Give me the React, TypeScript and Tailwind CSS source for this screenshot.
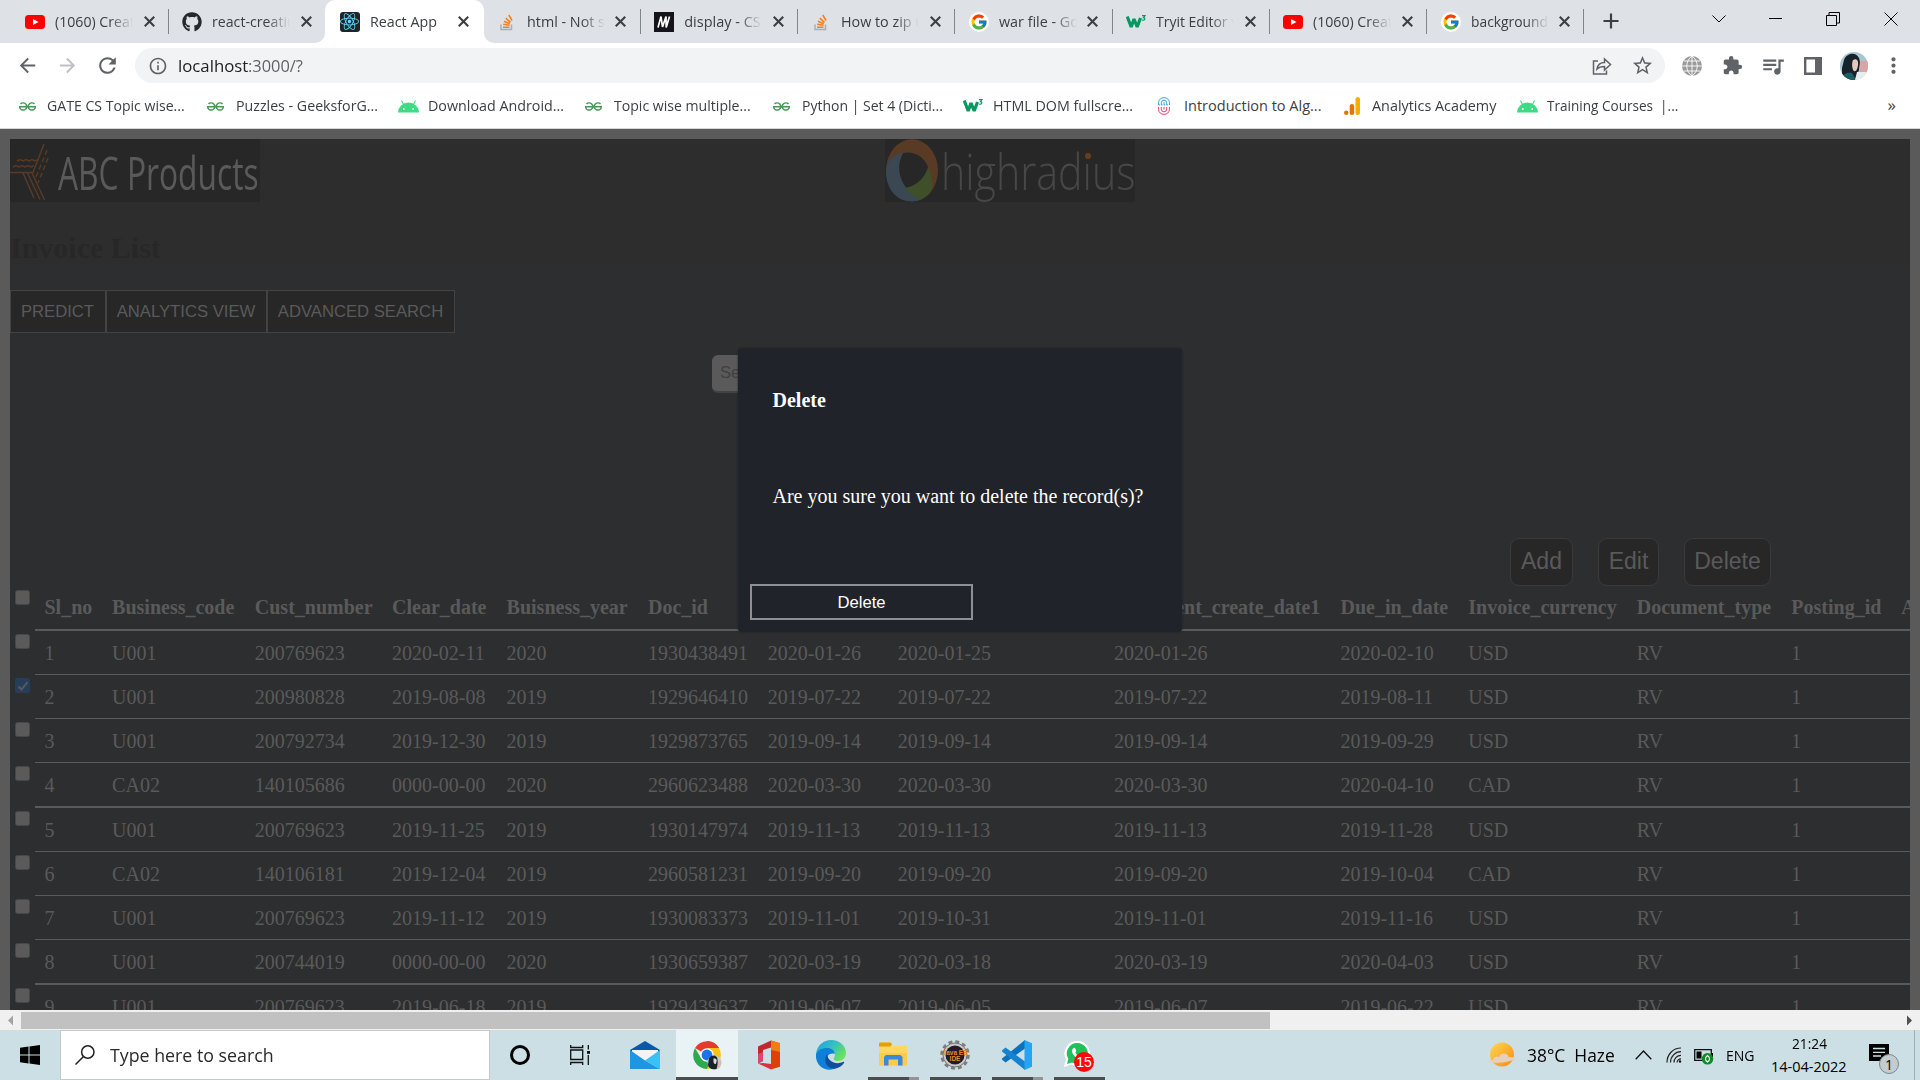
import { useLayoutEffect, useRef, useState } from "react";
import type { ReactNode } from "react";
import { FaGithub, FaReact } from "react-icons/fa";
import { FcGoogle } from "react-icons/fc";
import { SiGeeksforgeeks } from "react-icons/si";
import {
  MdArrowBack,
  MdArrowForward,
  MdRefresh,
  MdInfoOutline,
  MdStarBorder,
  MdExtension,
  MdQueueMusic,
  MdMoreVert,
} from "react-icons/md";

/* One line of text, condensed or stretched to an exact width. */
function Fit({ w, children, className = "" }: { w: number; children: string; className?: string }) {
  const ref = useRef<HTMLSpanElement>(null);
  const [scale, setScale] = useState(1);
  useLayoutEffect(() => {
    if (ref.current) setScale(w / ref.current.offsetWidth);
  }, [w]);
  return (
    <span className={"block shrink-0 whitespace-pre " + className} style={{ width: w }}>
      <span ref={ref} className="inline-block origin-left" style={{ transform: `scaleX(${scale})` }}>
        {children}
      </span>
    </span>
  );
}

const YouTube = () => (
  <svg viewBox="0 0 20 20" className="size-5">
    <rect x="0" y="3" width="20" height="14" rx="3.5" fill="#f00" />
    <path d="M8 7l5.5 3L8 13z" fill="#fff" />
  </svg>
);
const ReactFav = () => (
  <span className="flex size-5 items-center justify-center rounded-[3px] bg-[#20232a]">
    <FaReact size={19} color="#61dafb" />
  </span>
);
const StackO = () => (
  <svg viewBox="0 0 20 20" className="size-5" fill="none">
    <path d="M4 12.5v5h10.500v-5" stroke="#a9b0b8" strokeWidth="1.5" />
    <path d="M6 15.300h6.500M6.200 12.300l6.300.9M7 9.300l5.800 2.400M8.800 6.200l4.700 4.200M11.800 3l3.200 5.500" stroke="#f48024" strokeWidth="1.600" />
  </svg>
);
const Mdn = () => (
  <svg viewBox="0 0 20 20" className="size-5">
    <rect width="20" height="20" fill="#15141a" />
    <path d="M4 15.500L7 4.500L8.500 15L12 4.500L12.200 15.500L15.500 4.500" stroke="#fff" strokeWidth="1.700" fill="none" />
  </svg>
);
const Google = () => (
  <span className="flex size-5 items-center justify-center rounded-full bg-white">
    <FcGoogle size={18} />
  </span>
);
const W3 = () => (
  <svg viewBox="0 0 20 20" className="size-5" fill="none" stroke="#059862">
    <path d="M1.200 4.500l4 10.500L8 7l3.200 8L14.500 6" strokeWidth="3.200" strokeLinejoin="bevel" />
    <path d="M16 3.600h3l-1.500 2c2 0 2 3-1.500 2.600" strokeWidth="1.200" />
  </svg>
);
const Gfg = () => <SiGeeksforgeeks size={17} color="#449a57" />;
const Android = () => (
  <svg viewBox="0 0 21 16" className="h-4 w-[21px]">
    <path d="M0 14.500a10.500 10 0 0 1 21 0z" fill="#3ddc84" />
    <path d="M5.500 6.500L3.500 2.500M15.500 6.500l2-4" stroke="#3ddc84" strokeWidth="1.100" />
    <circle cx="5.800" cy="11" r=".9" fill="#fff" />
    <circle cx="15.200" cy="11" r=".9" fill="#fff" />
  </svg>
);
const Mooc = () => (
  <svg viewBox="0 0 16 20" className="h-[18px] w-4" fill="none" strokeWidth="1.100">
    <path d="M2 9V6a6 5.300 0 0 1 12 0v3M5 9V6.500a3 3 0 0 1 6 0V9M8 6v3" stroke="#3a9fd0" />
    <path d="M2 11v3a6 5.300 0 0 0 12 0v-3M5 11v2.500a3 3 0 0 0 6 0V11M8 11v3" stroke="#e8386d" />
    <path d="M2 8.800h12" stroke="#3a9fd0" strokeDasharray="1.500 1.500" />
  </svg>
);
const Analytics = () => (
  <svg viewBox="0 0 16 18" className="h-[18px] w-4">
    <rect x="11.500" y="0" width="4.500" height="18" rx="2.200" fill="#f9ab00" />
    <rect x="5.700" y="7" width="4.500" height="11" rx="2.200" fill="#e37400" />
    <circle cx="2.200" cy="15.700" r="2.200" fill="#e37400" />
  </svg>
);

const tabs: { icon: ReactNode; title: string; w: number; active?: boolean; sep?: boolean }[] = [
  { icon: <YouTube />, title: "(1060) Creat", w: 80, sep: true },
  { icon: <FaGithub size={20} color="#24292f" />, title: "react-creatin", w: 84 },
  { icon: <ReactFav />, title: "React App", w: 67, active: true },
  { icon: <StackO />, title: "html - Not so", w: 87, sep: true },
  { icon: <Mdn />, title: "display - CSS", w: 85, sep: true },
  { icon: <StackO />, title: "How to zip u", w: 83, sep: true },
  { icon: <Google />, title: "war file - Goo", w: 89, sep: true },
  { icon: <W3 />, title: "Tryit Editor v", w: 82, sep: true },
  { icon: <YouTube />, title: "(1060) Creat", w: 80, sep: true },
  { icon: <Google />, title: "background-", w: 81, sep: true },
];

const Cross = () => (
  <svg viewBox="0 0 10 10" className="size-[11px]" stroke="#3c4043" strokeWidth="1.900">
    <path d="M.7.7l8.600 8.600M9.300.7L.7 9.300" />
  </svg>
);

function TabStrip() {
  return (
    <div className="flex h-[43px] bg-[#dee1e6] pl-[11.5px]">
      {tabs.map((t, i) => (
        <div
          key={i}
          className={
            "relative flex w-[157.3px] shrink-0 items-center " +
            (t.active ? "-ml-px w-[159.300px] -mr-px rounded-t-[10px] bg-white pl-[14.500px]" : "pl-[13.500px]")
          }
        >
          {t.active && (
            <>
              <span className="absolute bottom-0 -left-2.5 size-2.5 bg-white">
                <span className="block size-full rounded-br-[10px] bg-[#dee1e6]" />
              </span>
              <span className="absolute -right-2.5 bottom-0 size-2.5 bg-white">
                <span className="block size-full rounded-bl-[10px] bg-[#dee1e6]" />
              </span>
            </>
          )}
          <span className="flex w-5 justify-center">{t.icon}</span>
          <div
            className={
              "ml-2.5 w-[78px] overflow-hidden text-[14.500px] text-[#3c4043] " +
              (t.active ? "" : "[mask-image:linear-gradient(to_right,black_70%,transparent_100%)]")
            }
          >
            <Fit w={t.w}>{t.title}</Fit>
          </div>
          <span className="ml-[10.500px]">
            <Cross />
          </span>
          {t.sep && <span className="absolute top-[9px] right-0 h-[25px] w-px bg-[#80868b]" />}
        </div>
      ))}
      <svg viewBox="0 0 16 16" className="mt-[13px] ml-[19px] size-4" stroke="#3c4043" strokeWidth="2.200">
        <path d="M8 .5v15M.5 8h15" />
      </svg>
      <div className="ml-auto flex h-[37px] items-center pr-[22px] text-black">
        <svg viewBox="0 0 14 8" className="h-2 w-3.5" fill="none" stroke="currentColor">
          <path d="M.5.500l6.500 6.500 6.500-6.500" />
        </svg>
        <span className="ml-[43px] h-px w-[13px] bg-black" />
        <svg viewBox="0 0 14 14" className="ml-[44px] size-3.5" fill="none" stroke="currentColor">
          <path d="M.5 3.500h10v10h-10zM3 3.500v-3h10.500V11h-3" />
        </svg>
        <svg viewBox="0 0 14 14" className="ml-[44px] size-3.5" stroke="currentColor">
          <path d="M.5.500l13 13M13.500.500l-13 13" />
        </svg>
      </div>
    </div>
  );
}

function Toolbar() {
  return (
    <div className="flex h-[45px] items-center bg-white pl-[16px] text-[#5f6368]">
      <MdArrowBack size={23} />
      <MdArrowForward size={23} className="ml-[17px] text-[#bdc1c6]" />
      <MdRefresh size={25} className="ml-[16px]" />
      <div className="ml-[15px] flex h-[35px] w-[1530px] items-center rounded-full bg-[#f1f3f4] pl-[13px]">
        <MdInfoOutline size={20} />
        <div className="ml-[10px] flex text-[17px]">
          <Fit w={70} className="text-[#202124]">localhost</Fit>
          <Fit w={55}>:3000/?</Fit>
        </div>
        <svg viewBox="0 0 20 20" className="ml-auto size-5" fill="none" stroke="#5f6368" strokeWidth="1.500">
          <path d="M6 5H1.500v13h13v-3.500M5 13c.8-4.500 3.500-6.500 7.500-6.500V3l6 5.500-6 5.500v-3.500c-3.500 0-5.500.5-7.500 2.500z" />
        </svg>
        <MdStarBorder size={23} className="mr-[11px] ml-[19px]" />
      </div>
      <svg viewBox="0 0 20 20" className="ml-[17px] size-5">
        <circle cx="10" cy="10" r="10" fill="#9a9a9a" />
        <path d="M10 0v20M0 10h20M2 5h16M2 15h16M10 0c-7 5-7 15 0 20M10 0c7 5 7 15 0 20" stroke="#fff" strokeWidth=".9" fill="none" />
      </svg>
      <MdExtension size={21} className="ml-[20px]" />
      <MdQueueMusic size={26} className="ml-[17px]" />
      <svg viewBox="0 0 18 18" className="ml-[18px] size-[18px]">
        <path d="M1.200 1.200h15.600v15.600H1.200z" fill="#fff" stroke="#5f6368" strokeWidth="2.400" />
        <path d="M11 0h7v18h-7z" fill="#5f6368" />
      </svg>
      <svg viewBox="0 0 28 28" className="ml-[18px] size-7">
        <clipPath id="avatar">
          <circle cx="14" cy="14" r="14" />
        </clipPath>
        <g clipPath="url(#avatar)">
          <path d="M0 0h28v28H0z" fill="#a9c6cf" />
          <path d="M20 9h8v13h-8z" fill="#d8a7a4" />
          <path d="M4 8C6 1 16-1 19 6c2 5 0 8 0 12l-4 10H2V16z" fill="#15232c" />
          <path d="M13 8c4-2 5.500 1 5 5s-2 7-4 6-2.500-8-1-11z" fill="#e6c9bb" />
          <path d="M2 28c1-7 6-8 10-7l4 7z" fill="#1f5f63" />
          <path d="M17 20l11 0v8H15z" fill="#e9ecec" />
        </g>
      </svg>
      <MdMoreVert size={25} className="ml-[13px]" />
    </div>
  );
}

const bookmarks: { icon: ReactNode; iconW: string; w: number; text: string; gap: string }[] = [
  { icon: <Gfg />, iconW: "w-[28px]", w: 138, text: "GATE CS Topic wise...", gap: "mr-[22px]" },
  { icon: <Gfg />, iconW: "w-[29px]", w: 142, text: "Puzzles - GeeksforG...", gap: "mr-[20px]" },
  { icon: <Android />, iconW: "w-[30px]", w: 136, text: "Download Android...", gap: "mr-[21px]" },
  { icon: <Gfg />, iconW: "w-[29px]", w: 137, text: "Topic wise multiple...", gap: "mr-[22px]" },
  { icon: <Gfg />, iconW: "w-[29px]", w: 141, text: "Python | Set 4 (Dicti...", gap: "mr-[20px]" },
  { icon: <W3 />, iconW: "w-[30px]", w: 140, text: "HTML DOM fullscre...", gap: "mr-[23px]" },
  { icon: <Mooc />, iconW: "w-[28px]", w: 137, text: "Introduction to Alg...", gap: "mr-[23px]" },
  { icon: <Analytics />, iconW: "w-[28px]", w: 124, text: "Analytics Academy", gap: "mr-[21px]" },
  { icon: <Android />, iconW: "w-[30px]", w: 131, text: "Training Courses  |...", gap: "" },
];

function Bookmarks() {
  return (
    <div className="flex h-[40px] items-center bg-white pb-[4px] pl-[19px] text-[14.500px] text-[#3c4043]">
      {bookmarks.map((b) => (
        <div key={b.text} className={"flex items-center " + b.gap}>
          <span className={b.iconW}>{b.icon}</span>
          <Fit w={b.w}>{b.text}</Fit>
        </div>
      ))}
      <span className="mr-[24px] ml-auto pb-[3px] text-[17px] leading-none">»</span>
    </div>
  );
}

function AbcLogo() {
  return (
    <div className="flex h-[63px] w-[250px] bg-[#272727]">
      <svg viewBox="0 0 40 63" className="h-[63px] w-10 shrink-0" fill="none" stroke="#573b24" strokeWidth="1.500">
        <path d="M0 33.500h23L34 5M13 34l11 25M17.500 34L30 60.500M22 34l12.500 27" />
        <path d="M37 11L26 38M38 19L28 44" strokeDasharray="5 3" />
        <path d="M7 22l3-1.500 3 1.500 3-1.500 3 1.500 3-1.500 3 1.500 3-1.500M3 28l3-1.500 3 1.500 3-1.500 3 1.500 3-1.500 3 1.500 3-1.500" />
      </svg>
      <div className="ml-[8px] text-[46px] leading-[66px] text-[#5a5a5a]">
        <Fit w={201}>ABC Products</Fit>
      </div>
    </div>
  );
}

function HighRadiusLogo() {
  return (
    <div className="relative flex h-[63px] w-[250px] bg-[#272727]">
      <svg viewBox="0 0 54 63" preserveAspectRatio="none" className="h-[63px] w-[54px] shrink-0">
        <ellipse cx="27" cy="31.300" rx="26" ry="31" fill="#593b25" />
        <path d="M18 14C6 16 1 24 1 33c0 16 10 29.500 26 29.500 4 0 8-1 11-3L21 48z" fill="#3a4854" />
        <path d="M43 28c4 8 5 16 4 23-2 4-6 7-10 9-7-2-13-6-17-11 12-2 20-12 23-21z" fill="#3e4f2a" />
        <path d="M18 14c10-2.500 21 3 25 14-3 11-12 19-22 20.500C13 38 12 25 18 14z" fill="#272727" />
      </svg>
      <div className="ml-[2px] text-[49px] leading-[65px] font-light text-[#474747]">
        <Fit w={194}>highradius</Fit>
      </div>
      <span className="absolute top-[14px] left-[200px] size-[6px] rounded-full bg-[#6b3c1c]" />
    </div>
  );
}

const headers = [
  "Sl_no",
  "Business_code",
  "Cust_number",
  "Clear_date",
  "Buisness_year",
  "Doc_id",
  "Posting_date",
  "Document_create_date",
  "Document_create_date1",
  "Due_in_date",
  "Invoice_currency",
  "Document_type",
  "Posting_id",
  "Area_business",
];

const rows = [
  ["1", "U001", "200769623", "2020-02-11", "2020", "1930438491", "2020-01-26", "2020-01-25", "2020-01-26", "2020-02-10", "USD", "RV", "1", ""],
  ["2", "U001", "200980828", "2019-08-08", "2019", "1929646410", "2019-07-22", "2019-07-22", "2019-07-22", "2019-08-11", "USD", "RV", "1", ""],
  ["3", "U001", "200792734", "2019-12-30", "2019", "1929873765", "2019-09-14", "2019-09-14", "2019-09-14", "2019-09-29", "USD", "RV", "1", ""],
  ["4", "CA02", "140105686", "0000-00-00", "2020", "2960623488", "2020-03-30", "2020-03-30", "2020-03-30", "2020-04-10", "CAD", "RV", "1", ""],
  ["5", "U001", "200769623", "2019-11-25", "2019", "1930147974", "2019-11-13", "2019-11-13", "2019-11-13", "2019-11-28", "USD", "RV", "1", ""],
  ["6", "CA02", "140106181", "2019-12-04", "2019", "2960581231", "2019-09-20", "2019-09-20", "2019-09-20", "2019-10-04", "CAD", "RV", "1", ""],
  ["7", "U001", "200769623", "2019-11-12", "2019", "1930083373", "2019-11-01", "2019-10-31", "2019-11-01", "2019-11-16", "USD", "RV", "1", ""],
  ["8", "U001", "200744019", "0000-00-00", "2020", "1930659387", "2020-03-19", "2020-03-18", "2020-03-19", "2020-04-03", "USD", "RV", "1", ""],
  ["9", "U001", "200769623", "2019-06-18", "2019", "1929439637", "2019-06-07", "2019-06-05", "2019-06-07", "2019-06-22", "USD", "RV", "1", ""],
];

function Check({ on }: { on?: boolean }) {
  return on ? (
    <span className="mt-[3px] ml-[5px] flex size-[15px] shrink-0 items-center justify-center rounded-[2.500px] bg-[#273e5b]">
      <svg viewBox="0 0 12 12" className="size-3" fill="none" stroke="#5a5a5a" strokeWidth="2">
        <path d="M1.500 6.500l3 3 6-7.500" />
      </svg>
    </span>
  ) : (
    <span className="mt-[3px] ml-[5px] size-[15px] shrink-0 rounded-[2.500px] border border-[#474747] bg-[#5a5a5a]" />
  );
}

function Row({ cells, head, thick, on }: { cells: string[]; head?: boolean; thick?: boolean; on?: boolean }) {
  return (
    <div className={"flex w-[2060px] " + (thick && !head ? "h-[45px]" : "h-11")}>
      <div className="flex w-[25px] shrink-0 items-start">
        <Check on={on} />
      </div>
      <div
        className={
          "grid grid-cols-[67.600px_142.700px_137.300px_114.500px_141.400px_119.800px_130px_216.300px_226.400px_127.800px_168.500px_154.600px_110px_150px] border-[#5a5a5a] text-[#5a5a5a] " +
          (thick ? "border-b-2 " : "border-b ") +
          (head ? "leading-[40px] font-bold" : "pt-[2px] leading-[41px]")
        }
      >
        {cells.map((c, i) => (
          <span key={i} className="pl-[9.500px] whitespace-nowrap">
            {c}
          </span>
        ))}
      </div>
    </div>
  );
}

function Modal() {
  return (
    <div className="absolute top-[219px] left-[738px] flex h-[284px] w-[444px] flex-col rounded-[4px] bg-[#21232b] pt-[41px] pl-3 font-['Liberation_Serif'] text-[20px] text-white shadow-[0_0_2px_#1d1f25]">
      <p className="pl-[22.500px] leading-[22px] font-bold">Delete</p>
      <p className="mt-[74px] pl-[22.500px] leading-[22px]">Are you sure you want to delete the record(s)?</p>
      <button className="mt-[77px] h-9 w-[223px] border-2 border-[#8e9094] pt-[2px] font-['Liberation_Sans'] text-[16.670px] leading-none">
        Delete
      </button>
    </div>
  );
}

function Page() {
  return (
    <div className="relative h-[881px] overflow-hidden bg-[#5a5a5a] px-2.5 pt-2.5">
      <div className="h-[871px] overflow-hidden bg-[#2d2e30]">
        <div className="h-[126px] bg-[#2e2d2d]">
          <div className="flex gap-[625px]">
            <AbcLogo />
            <HighRadiusLogo />
          </div>
          <h2 className="mt-[29px] font-['Liberation_Serif'] text-[30px] leading-[34px] font-bold text-[#272728]">
            Invoice List
          </h2>
        </div>
        <div className="mt-[25px] flex font-['Liberation_Sans'] text-[16.670px] text-[#5a5a5a]">
          <button className="h-[43px] w-[96px] border border-[#434343] bg-[#272727] pr-px">PREDICT</button>
          <button className="h-[43px] w-[161px] border border-[#434343] bg-[#272727] pr-px">ANALYTICS VIEW</button>
          <button className="h-[43px] w-[188px] border border-[#434343] bg-[#272727] pr-px">ADVANCED SEARCH</button>
        </div>
        <div className="mt-[22px] ml-[702px] h-[38px] w-[230px] rounded-[6px] border-b-2 border-[#434343] bg-[#5a5a5a] pl-[8px] font-['Liberation_Sans'] text-[16.670px] leading-[35px] text-[#404040]">
          Search
        </div>
        <div className="mt-[145px] ml-[1500px] flex gap-[25px] font-['Liberation_Sans'] text-[23px] text-[#5a5a5a]">
          <button className="h-12 w-[63px] rounded-[9px] border border-[#3a3a3a] bg-[#272727] pb-px">Add</button>
          <button className="h-12 w-[61px] rounded-[9px] border border-[#3a3a3a] bg-[#272727] pb-px">Edit</button>
          <button className="h-12 w-[87px] rounded-[9px] border border-[#3a3a3a] bg-[#272727] pb-px">Delete</button>
        </div>
        <div className="mt-px font-['Liberation_Serif'] text-[20px]">
          <Row cells={headers} head thick />
          {rows.map((r, i) => (
            <Row key={i} cells={r} thick={i % 4 === 3} on={i === 1} />
          ))}
        </div>
      </div>
      <Modal />
    </div>
  );
}

function ScrollBar() {
  return (
    <div className="flex h-5 items-center bg-[#f0f0f0]">
      <svg viewBox="0 0 21 20" className="h-5 w-[21px]">
        <path d="M13 5.500v10L8 10.500z" fill="#a3a3a3" />
      </svg>
      <div className="h-[17px] w-[1249px] bg-[#c1c1c1]" />
      <svg viewBox="0 0 21 20" className="ml-auto h-5 w-[21px]">
        <path d="M8 5.500v10l5-5z" fill="#505050" />
      </svg>
    </div>
  );
}

function TaskItem({ children, active, line, more }: { children: ReactNode; active?: boolean; line?: boolean; more?: boolean }) {
  return (
    <div className={"relative flex h-[50px] w-[62px] items-center justify-center " + (active ? "bg-[#e9f2f4]" : "")}>
      {children}
      {line && (
        <span className={"absolute bottom-0 flex h-[3px] " + (active ? "inset-x-0" : "inset-x-[5.500px]")}>
          <span className="flex-1 bg-[#4a4d4e]" />
          {more && <span className="w-2.5 bg-[#909596]" />}
        </span>
      )}
    </div>
  );
}

function TaskBar() {
  return (
    <div className="flex h-[50px] items-center bg-[#cbdfe4] text-black">
      <svg viewBox="0 0 20 20" className="mx-5 size-5">
        <path d="M0 2.800L8.500 1.600v8H0zM9.500 1.400L20 0v9.600H9.500zM0 10.500h8.500v8L0 17.300zM9.500 10.500H20V20L9.500 18.600z" />
      </svg>
      <div className="flex h-[50px] w-[430px] items-center border border-[#c4cbcd] bg-white pl-[14px]">
        <svg viewBox="0 0 20 20" className="size-5" fill="none" stroke="#222" strokeWidth="1.500">
          <circle cx="12.800" cy="7" r="6.200" />
          <path d="M8.500 11.500L.5 19.500" />
        </svg>
        <div className="ml-[15px] text-[18px] text-[#2a2a2a]">
          <Fit w={164}>Type here to search</Fit>
        </div>
      </div>
      <span className="ml-[20px] size-5 rounded-full border-[3px] border-black" />
      <svg viewBox="0 0 20 20" className="ml-[40px] size-5" fill="none" stroke="#111" strokeWidth="1.300">
        <path d="M.7 5h12v9.500H.7zM.7 0v2.500h12V0M.7 20v-2.500h12V20M18.300 0v4.500M18.300 10v10" />
        <path d="M17 6h3v2.800h-3z" fill="#111" stroke="none" />
      </svg>
      <div className="ml-[24px] flex">
        <TaskItem>
          <svg viewBox="0 0 30 30" className="size-[30px]">
            <path d="M0 10L15 1l15 9v2H0z" fill="#0a59a8" />
            <path d="M2 10h26v10H2z" fill="#f4f4f6" />
            <path d="M0 10l15 10.500L30 29H0z" fill="#1f96e2" />
            <path d="M30 10L15 20.500L30 29z" fill="#38c2f3" />
          </svg>
        </TaskItem>
        <TaskItem active line>
          <svg viewBox="0 0 30 30" className="size-[30px]">
            <path d="M15 15L3 8A14 14 0 0 1 27 8z" fill="#e33b2e" />
            <path d="M15 1a14 14 0 0 1 12 7H15z" fill="#e33b2e" />
            <path d="M27 8a14 14 0 0 1-12 21l5-11-5-10z" fill="#fbc116" />
            <path d="M15 29A14 14 0 0 1 3 8l6 10 9 4z" fill="#2da94f" />
            <circle cx="15" cy="15" r="6.800" fill="#fff" />
            <circle cx="15" cy="15" r="5.400" fill="#1a73e8" />
            <circle cx="22.500" cy="22.500" r="7" fill="#c3cdd2" />
            <path d="M24 20l5 1c1 4-1 7-4 8z" fill="#ddb9b4" />
            <path d="M17 18c3-4 8-3 8.500 1 .3 4 0 7-1 10-5 1-8-1-8.500-4z" fill="#18242b" />
            <path d="M21.500 18.500c3-.5 3.500 1 3 3.500s-2 3-3 0z" fill="#e8d9d3" />
          </svg>
        </TaskItem>
        <TaskItem>
          <svg viewBox="0 0 24 30" className="h-[30px] w-6">
            <path d="M14 0.500L1 6.500v17l5-2.500V10l8-2.500z" fill="#c4262e" />
            <path d="M1 14v9.500l5-2.500v-9z" fill="#d9486c" />
            <path d="M14 0.500l9 2.700v23.600l-9 2.700z" fill="#dc4108" />
            <path d="M14 0.500l9 2.700v8.800l-9-2z" fill="#f07c12" />
            <path d="M1 23.500l13 6v-5.500l-8-1z" fill="#dd2f3f" />
          </svg>
        </TaskItem>
        <TaskItem>
          <svg viewBox="0 0 30 30" className="size-[30px]">
            <defs>
              <linearGradient id="edgeTop" x1="0" y1="0" x2="1" y2=".6">
                <stop offset="0" stopColor="#1f9fe0" />
                <stop offset=".55" stopColor="#35c1c0" />
                <stop offset="1" stopColor="#6be35a" />
              </linearGradient>
            </defs>
            <path d="M0 14C1 5 8 0 15 0c9 0 15 6 15 13 0 5-4 8-8 8-3 0-5-1-4-3 3-5-2-9-7-9-5 0-9 2-11 5z" fill="url(#edgeTop)" />
            <path d="M0 14c2-4 6-6 11-6 5 0 8 3 7.500 6-5-2-9 3-7.500 8 1 4 4 6 7 7C8 32-1 25 0 14z" fill="#0f7fd8" />
            <path d="M11 14c-4 6-1 14 7 15 5-1 8-3 10-6 .5-1 0-1.500-1-1-7 3-15 0-16-8z" fill="#114f9e" />
          </svg>
        </TaskItem>
        <TaskItem line more>
          <svg viewBox="0 0 28 28" className="size-7">
            <path d="M0 3c0-1 .5-1.500 1.500-1.500h10L13 3v2H28v8H0z" fill="#fdd663" />
            <path d="M0 3c0-1 .5-1.500 1.500-1.500h10L13 3l-1.500 2.500H0z" fill="#e2a100" />
            <path d="M0 12h28v12.500H0z" fill="#fbcb4c" />
            <path d="M5 24.500V16l2-2h14.500l2 2v8.500H19V18.500H9.500v6z" fill="#3a8ad8" />
          </svg>
        </TaskItem>
        <TaskItem line>
          <svg viewBox="0 0 30 30" className="size-[30px]">
            <circle cx="15" cy="15" r="13" fill="none" stroke="#7d7d7d" strokeWidth="3.500" strokeDasharray="3.800 3" />
            <circle cx="15" cy="15" r="12" fill="#c9c9c9" stroke="#777" />
            <circle cx="15" cy="15" r="9.500" fill="#221b2e" />
            <text x="15" y="14.500" textAnchor="middle" fontSize="6.500" fontWeight="700" fill="#e8872a" fontFamily="Liberation Sans">Java EE</text>
            <text x="15" y="20.500" textAnchor="middle" fontSize="6.500" fontWeight="700" fill="#e8872a" fontFamily="Liberation Sans">IDE</text>
          </svg>
        </TaskItem>
        <TaskItem line more>
          <svg viewBox="0 0 30 30" className="size-[30px]">
            <path d="M23 0v8.500L3.500 22.500L0 19.500v-1z" fill="#0b72bd" />
            <path d="M23 30v-8.500L3.500 7.500L0 10.500v1z" fill="#1583cf" />
            <path d="M22.500 0l7.500 3.200v23.600L22.500 30z" fill="#25a4f3" />
          </svg>
        </TaskItem>
        <TaskItem line>
          <span className="relative flex size-[30px] items-center justify-center">
            <svg viewBox="0 0 30 30" className="absolute size-[30px]">
              <path d="M13.500 1a12.500 12.500 0 1 1-6 23.500L0 27l2-7.500A12.500 12.500 0 0 1 13.500 1z" fill="#fff" />
              <path d="M13.500 3a10.500 10.500 0 1 1-5.500 19.500L3 24l1.400-5A10.500 10.500 0 0 1 13.500 3z" fill="#20c05a" />
              <path d="M9 8.500c1-1 2-.8 2.500.5l.8 2-1 1.500c1 2 2.300 3.200 4.200 4l1.500-1.300 3 1.500c-.5 2.500-2.500 3-5 2.300-4-1.500-6.500-4.500-7-7.500-.1-1.200.3-2.200 1-3z" fill="#fff" />
            </svg>
            <span className="absolute top-[12px] left-[10px] flex size-5 items-center justify-center rounded-full bg-[#fa0a0a] font-['Liberation_Sans'] text-[14px] text-white">
              15
            </span>
          </span>
        </TaskItem>
      </div>
      <svg viewBox="0 0 28 26" className="ml-auto h-[26px] w-7">
        <defs>
          <linearGradient id="sun" x1="0" y1="0" x2="1" y2="1">
            <stop offset="0" stopColor="#ffd84f" />
            <stop offset="1" stopColor="#f78a14" />
          </linearGradient>
        </defs>
        <circle cx="14" cy="12.500" r="12" fill="url(#sun)" />
        <path d="M1 20c-1-1.500 1-2 4-2 1-4 4-4 6-3 2-5 9-4 9.500 0 5-.5 6 1.500 7.500 2.500-1 1.500-5 1-8 2-4 1.500-14 1.500-19 .5z" fill="#e6d0bd" />
      </svg>
      <div className="ml-[11px] flex text-[18px]">
        <Fit w={88}>38°C  Haze</Fit>
      </div>
      <svg viewBox="0 0 17 10" className="ml-[20px] h-2.5 w-[17px]" fill="none" stroke="#111" strokeWidth="1.300">
        <path d="M.7 9.300L8.500 1l7.800 8.300" />
      </svg>
      <svg viewBox="0 0 16 16" className="ml-[14px] size-4" fill="none" stroke="#222" strokeWidth="1.200">
        <path d="M1 15.500C1 7.500 7 1 15 1M4.500 15.500C4.500 9.500 9 4.700 15 4.700M8 15.500c0-4 3-7.200 7-7.200" />
        <path d="M11 15.500c0-2 2-3.700 4-3.700" />
        <circle cx="14" cy="14.500" r="1.200" fill="#111" stroke="none" />
      </svg>
      <svg viewBox="0 0 20 17" className="mt-[3px] ml-[12px] h-[17px] w-5">
        <path d="M.7 1.700h16.600v10.600H.7z" fill="none" stroke="#111" strokeWidth="1.300" />
        <path d="M2.500 3.500h5v7h-5zM17.500 5H19v4h-1.500z" />
        <circle cx="13.500" cy="10.800" r="5.800" fill="#0e8a26" />
        <path d="M13.500 7.500c3 2.500 2.500 5 0 6.500-2.500-1.500-3-4 0-6.500z" fill="none" stroke="#fff" strokeWidth="1.100" />
      </svg>
      <div className="ml-[12px] text-[15px]">
        <Fit w={29}>ENG</Fit>
      </div>
      <div className="ml-[16px] flex w-[76px] flex-col items-center text-[14.500px] leading-[23px]">
        <Fit w={35}>21:24</Fit>
        <Fit w={76}>14-04-2022</Fit>
      </div>
      <div className="relative mr-[5px] ml-[22px] h-[30px] w-[46px]">
        <svg viewBox="0 0 20 20" className="absolute top-[4px] left-0 size-5">
          <path d="M0 0h20v17h-4v3l-4-3H0z" />
          <path d="M4 4.500h12M4 8.300h12M4 12h8" stroke="#cbdfe4" strokeWidth="1.300" />
        </svg>
        <span className="absolute top-[14px] left-[10px] flex size-5 items-center justify-center rounded-full border border-[#7d8a8d] bg-[#c3cdd0] text-[14px]">
          1
        </span>
        <span className="absolute -top-2.5 right-0 h-[50px] w-px bg-[#9fb0b4]" />
      </div>
    </div>
  );
}

export default function App() {
  return (
    <div className="flex h-[1080px] w-[1920px] flex-col overflow-hidden bg-white font-['Open_Sans',sans-serif]">
      <TabStrip />
      <Toolbar />
      <Bookmarks />
      <div className="h-px bg-[#d5d5d5]" />
      <Page />
      <ScrollBar />
      <TaskBar />
    </div>
  );
}
